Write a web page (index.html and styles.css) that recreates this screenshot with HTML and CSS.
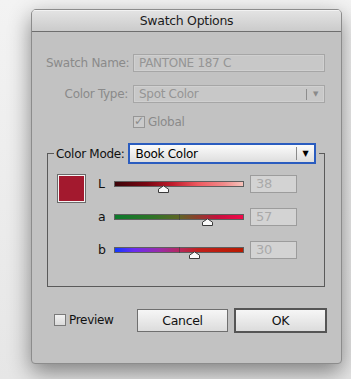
FILE: index.html
```html
<!DOCTYPE html>
<html>
<head>
	<title>Swatch Options</title>
	<link rel="stylesheet" href="styles.css">
</head>
<body>
<div class="dialog">
    <div class="titlebar">Swatch Options</div>

    <div class="content">
        <div class="form-row">
            <label class="field-label">Swatch Name:</label>
            <div class="text-field">PANTONE 187 C</div>
        </div>

        <div class="form-row type-row">
            <label class="field-label">Color Type:</label>
            <div class="select-field">
                <span class="select-text">Spot Color</span>
                <span class="select-sep"></span>
                <span class="select-arrow">&#9660;</span>
            </div>
        </div>

        <div class="form-row global-row">
            <span></span>
            <label class="check-label"><span class="checkbox">&#10003;</span>Global</label>
        </div>

        <fieldset class="mode-group">
            <legend>
                <span class="mode-label">Color Mode:</span>
                <div class="mode-select">
                    <span class="select-text">Book Color</span>
                    <span class="select-sep"></span>
                    <span class="select-arrow">&#9660;</span>
                </div>
            </legend>

            <div class="mode-body">
                <div class="swatch"></div>
                <div class="sliders">
                    <span class="channel">L</span>
                    <div class="track-wrap">
                        <div class="track track-l">
                            <svg class="thumb" style="left: 37.7%" width="11" height="8" viewBox="0 0 11 8"><path d="M0.5 7.5V4.2L5.5 0.8L10.5 4.2V7.5Z" fill="#fafafa" stroke="#3a3a3a"/></svg>
                        </div>
                    </div>
                    <div class="num-field">38</div>

                    <span class="channel">a</span>
                    <div class="track-wrap">
                        <div class="track track-a">
                            <span class="mid"></span>
                            <svg class="thumb" style="left: 72%" width="11" height="8" viewBox="0 0 11 8"><path d="M0.5 7.5V4.2L5.5 0.8L10.5 4.2V7.5Z" fill="#fafafa" stroke="#3a3a3a"/></svg>
                        </div>
                    </div>
                    <div class="num-field">57</div>

                    <span class="channel">b</span>
                    <div class="track-wrap">
                        <div class="track track-b">
                            <span class="mid"></span>
                            <svg class="thumb" style="left: 61.5%" width="11" height="8" viewBox="0 0 11 8"><path d="M0.5 7.5V4.2L5.5 0.8L10.5 4.2V7.5Z" fill="#fafafa" stroke="#3a3a3a"/></svg>
                        </div>
                    </div>
                    <div class="num-field">30</div>
                </div>
            </div>
        </fieldset>

        <div class="actions">
            <label class="preview"><span class="checkbox empty"></span>Preview</label>
            <div class="buttons">
                <button class="btn">Cancel</button>
                <button class="btn btn-default">OK</button>
            </div>
        </div>
    </div>
</div>
</body>
</html>
```

FILE: styles.css
```css
body {
    margin: 0;
    padding: 9px 0 0 31px;
    height: 379px;
    box-sizing: border-box;
    background: linear-gradient(#f3f3f3, #e6e6e6);
    font-family: "DejaVu Sans", "Liberation Sans", sans-serif;
    font-size: 12px;
    letter-spacing: -0.3px;
    overflow: hidden;
}

.dialog {
    width: 311px;
    height: 355px;
    box-sizing: border-box;
    background-color: #c2c2c2;
    border: 1px solid #8c8c8c;
    border-radius: 5px 5px 4px 4px;
    box-shadow: 0 8px 22px rgba(0, 0, 0, 0.45);
    overflow: hidden;
}

.titlebar {
    height: 21px;
    line-height: 21px;
    text-align: center;
    font-size: 12.5px;
    color: #1c1c1c;
    background: linear-gradient(#e4e4e4, #cbcbcb);
    border-bottom: 1px solid #6e6e6e;
    box-shadow: inset 0 1px 0 #f2f2f2;
}

.content {
    padding: 22px 14px 0 14px;
}

.form-row {
    display: grid;
    grid-template-columns: 82px 192px;
    column-gap: 5px;
    align-items: center;
    height: 18px;
    margin-bottom: 13px;
}

.field-label {
    text-align: right;
    white-space: nowrap;
    color: #8a8a8a;
}

.text-field,
.select-field {
    height: 18px;
    box-sizing: border-box;
    border: 1px solid #a6a6a6;
    box-shadow: inset 0 0 0 1px #d0d0d0;
    background-color: #c8c8c8;
    color: #959595;
    padding-left: 5px;
    line-height: 16px;
}

.select-field {
    display: flex;
    align-items: center;
}

.select-field .select-text {
    flex: 1;
}

.select-field .select-sep {
    width: 1px;
    height: 11px;
    background-color: #8d8d8d;
}

.select-field .select-arrow {
    width: 17px;
    text-align: center;
    font-size: 7px;
    color: #8a8a8a;
}

.type-row {
    margin-bottom: 10px;
}

.global-row {
    margin-bottom: 0;
}

.check-label {
    display: flex;
    align-items: center;
    color: #8a8a8a;
}

.checkbox {
    width: 12px;
    height: 12px;
    box-sizing: border-box;
    border: 1px solid #969696;
    background-color: #cacaca;
    color: #8a8a8a;
    font-size: 12px;
    line-height: 9px;
    text-align: center;
    margin-right: 3px;
}

.mode-group {
    margin: 12px 0 0 1px;
    width: 278px;
    box-sizing: border-box;
    border: 1px solid #5a5a5a;
    padding: 10px 0 27px 6px;
}

.mode-group legend {
    display: flex;
    align-items: center;
    width: 265px;
    height: 21px;
    box-sizing: border-box;
    padding: 0 3px 0 2px;
    color: #111;
}

.mode-label {
    white-space: nowrap;
    margin-right: 3px;
}

.mode-select {
    flex: 1;
    display: flex;
    align-items: center;
    height: 21px;
    box-sizing: border-box;
    border: 2px solid #2a5cbf;
    background: linear-gradient(#fbfbfb, #dedede);
    padding-left: 6px;
    color: #000;
}

.mode-select .select-text {
    flex: 1;
}

.mode-select .select-sep {
    width: 1px;
    height: 13px;
    background-color: #8a8a8a;
}

.mode-select .select-arrow {
    width: 17px;
    text-align: center;
    font-size: 8px;
    color: #000;
}

.mode-body {
    display: flex;
    align-items: flex-start;
}

.swatch {
    width: 29px;
    height: 29px;
    box-sizing: border-box;
    margin-left: 3px;
    border: 1px solid #6a6a6a;
    box-shadow: inset 0 0 0 1px #f4f4f4;
    background-color: #a3192e;
}

.sliders {
    display: grid;
    grid-template-columns: 28px 130px 53px;
    grid-auto-rows: 18px;
    row-gap: 15px;
    margin-top: 1px;
}

.sliders .channel {
    padding-left: 12px;
    color: #111;
    line-height: 18px;
    font-size: 12.5px;
}

.track-wrap {
    display: flex;
    align-items: center;
}

.track {
    position: relative;
    width: 130px;
    height: 6px;
    box-sizing: border-box;
    border: 1px solid #5e5e5e;
}

.track-l {
    background: linear-gradient(to right, #3c0409, #7a0612 25%, #c01c2c 45%, #ee5a60 65%, #f18a8a 85%, #f7c3bb);
}

.track-a {
    background: linear-gradient(to right, #0c7a2c, #2f7426 30%, #5e6524 50%, #8e3c2c 65%, #c4103c 80%, #f2084a);
}

.track-b {
    background: linear-gradient(to right, #1038ff, #6a2cf0 15%, #9a2ca8 35%, #b52860 50%, #c0201c 65%, #b81a00);
}

.track .mid {
    position: absolute;
    left: 50%;
    top: -1px;
    width: 1px;
    height: 6px;
    background-color: rgba(60, 60, 60, 0.6);
}

.thumb {
    position: absolute;
    top: 3px;
    margin-left: -5px;
}

.num-field {
    height: 18px;
    margin-left: 6px;
    box-sizing: border-box;
    border: 1px solid #9c9c9c;
    background-color: #d3d3d3;
    color: #a9a9a9;
    font-size: 13px;
    line-height: 16px;
    padding-left: 5px;
}

.actions {
    display: flex;
    align-items: center;
    margin-top: 21px;
    padding-left: 8px;
    height: 25px;
}

.preview {
    display: flex;
    align-items: center;
    color: #111;
    margin-top: -2px;
}

.checkbox.empty {
    background: linear-gradient(#f2f2f2, #dadada);
    border-color: #7a7a7a;
}

.buttons {
    display: flex;
    align-items: center;
    margin-left: auto;
    gap: 6px;
}

.btn {
    font-family: inherit;
    font-size: 12.5px;
    letter-spacing: -0.3px;
    width: 91px;
    height: 23px;
    border: 1px solid #6f6f6f;
    border-radius: 0;
    background: linear-gradient(#f6f6f6, #dcdcdc);
    color: #111;
    padding: 0;
}

.btn-default {
    width: 93px;
    height: 25px;
    border: 2px solid #555;
}
```
